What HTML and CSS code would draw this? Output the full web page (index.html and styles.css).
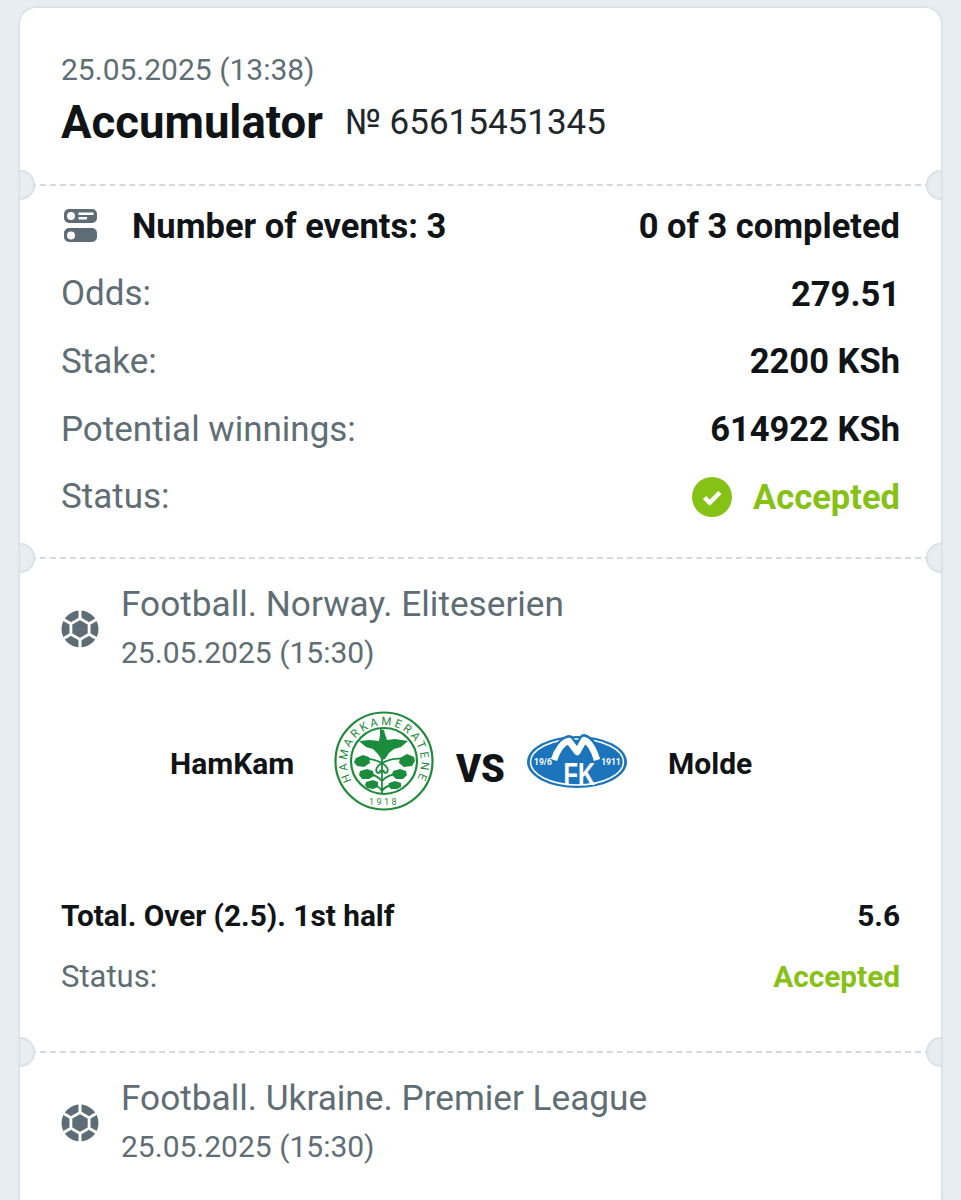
FILE: index.html
```html
<!DOCTYPE html>
<html lang="en">
<head>
<meta charset="utf-8">
<title>Accumulator</title>
<link rel="stylesheet" href="styles.css">
</head>
<body>
<main class="ticket">
  <header class="section head">
    <div class="date">25.05.2025 (13:38)</div>
    <div class="title-row">
      <h1 class="title">Accumulator</h1>
      <span class="number">№ 65615451345</span>
    </div>
  </header>

  <section class="section summary">
    <span class="notch left"></span><span class="notch right"></span>
    <div class="row">
      <div class="events">
        <svg class="list-icon" viewBox="0 0 33 33" aria-hidden="true">
          <path fill="#5d6c75" fill-rule="evenodd" d="M5 0h23a5 5 0 0 1 5 5v4a5 5 0 0 1-5 5H5a5 5 0 0 1-5-5V5a5 5 0 0 1 5-5Zm2 3a4 4 0 1 0 0 8 4 4 0 0 0 0-8Zm7.500.5V6h15V3.500Zm0 4.500v2.500h8.500V8Z"/>
          <path fill="#5d6c75" fill-rule="evenodd" d="M5 19h23a5 5 0 0 1 5 5v4a5 5 0 0 1-5 5H5a5 5 0 0 1-5-5v-4a5 5 0 0 1 5-5Zm2 3.500a4 4 0 1 0 0 8 4 4 0 0 0 0-8Z"/>
        </svg>
        <strong class="value">Number of events: 3</strong>
      </div>
      <strong class="value">0 of 3 completed</strong>
    </div>
    <div class="row"><span class="label">Odds:</span><strong class="value">279.51</strong></div>
    <div class="row"><span class="label">Stake:</span><strong class="value">2200 KSh</strong></div>
    <div class="row"><span class="label">Potential winnings:</span><strong class="value">614922 KSh</strong></div>
    <div class="row">
      <span class="label">Status:</span>
      <div class="status">
        <svg class="check" viewBox="0 0 40 40" aria-hidden="true">
          <circle cx="20" cy="20" r="20" fill="#86c216"/>
          <path d="M12.500 20.500l5.300 5.300 10-10.300" fill="none" stroke="#fff" stroke-width="4.500" stroke-linejoin="round"/>
        </svg>
        <strong class="value accepted">Accepted</strong>
      </div>
    </div>
  </section>

  <section class="section event">
    <span class="notch left"></span><span class="notch right"></span>
    <div class="league">
      <svg class="ball" viewBox="0 0 38 38" aria-hidden="true">
        <g id="ball">
          <circle cx="19" cy="19" r="18.500" fill="#5d6c75"/>
          <path d="M19 0v9M36.300 9 27.660 14M36.300 29 27.660 24M19 38v-9M1.700 29l8.640-5M1.700 9l8.640 5" stroke="#fff" stroke-width="3" fill="none"/>
          <path d="M19 8.500l9.100 5.250v10.500L19 29.500l-9.100-5.250v-10.500Z" fill="#5d6c75" stroke="#fff" stroke-width="2.800"/>
        </g>
      </svg>
      <div>
        <div class="league-name">Football. Norway. Eliteserien</div>
        <div class="league-date">25.05.2025 (15:30)</div>
      </div>
    </div>
    <div class="match">
      <span class="team home">HamKam</span>
      <svg class="crest-ham" viewBox="0 0 100 100" role="img" aria-label="HamKam crest">
        <circle cx="50" cy="50" r="48.500" fill="none" stroke="#1f8a3a" stroke-width="2.200"/>
        <circle cx="50" cy="50" r="33" fill="none" stroke="#1f8a3a" stroke-width="2.200"/>
        <defs>
          <path id="ringTop" d="M17 68A37 37 0 1 1 83 68"/>
        </defs>
        <text class="crest-ring"><textPath href="#ringTop" startOffset="50%" text-anchor="middle">HAMARKAMERATENE</textPath></text>
        <text class="crest-year" x="50" y="94" text-anchor="middle">1918</text>
        <path fill="#1a8c3c" d="M46 18l4 1 1 4 2 6 8-1 13 2-7 6-7 2-5 4-4 6-3 1-4-6-5-5-7-2-7-6 11-1 9 1 1-6Z"/>
        <path d="M48 44v38M48 52c-6-3-14-6-22-3M48 52c6-3 16-6 26-3M48 52c-5 3-7 7-5 9 2 2 4 0 3-2M48 52c5 3 7 7 5 9-2 2-4 0-3-2M48 70c-4-5-10-7-15-8M48 70c4-5 10-7 18-8M48 80c-3-5-6-6-10-7M48 80c3-5 8-6 13-6" fill="none" stroke="#1a8c3c" stroke-width="1.800"/>
        <g fill="#1a8c3c">
          <path d="M22 47l7-3 6 2 1 6-6 4-7-1-3-4Z"/>
          <path d="M66 47l7-4 7 3 1 4-3 5-8 1-5-4Z"/>
          <path d="M26 60l7-2 6 2 1 5-5 3-7 0-3-4Z"/>
          <path d="M59 60l7-2 6 2 1 4-4 4-7 0-4-4Z"/>
          <path d="M32 71l7-2 5 2 0 5-5 2-6-1-2-3Z"/>
          <path d="M55 72l6-2 6 2 0 4-4 2-6 0-3-3Z"/>
        </g>
      </svg>
      <span class="vs">VS</span>
      <svg class="crest-molde" viewBox="0 0 102 56" role="img" aria-label="Molde crest">
        <ellipse cx="51" cy="29" rx="50" ry="26" fill="#1c74bd"/>
        <ellipse cx="51" cy="29" rx="46.500" ry="23" fill="none" stroke="#fff" stroke-width="1.500"/>
        <path d="M27 29C30 18 36 9 43 7l8.300 12L58 6c6 2 11 11 14 23" fill="none" stroke="#1c74bd" stroke-width="10" stroke-linejoin="round"/>
        <path d="M28 27C31 17 37 9 43 8l8.300 11L58 7c6 2 10 10 13 20" fill="none" stroke="#fff" stroke-width="6.500" stroke-linejoin="round"/>
        <text class="molde-date" x="17" y="32" text-anchor="middle">19/6</text>
        <text class="molde-date" x="85" y="32" text-anchor="middle">1911</text>
        <text class="molde-fk" transform="translate(37.500 52) scale(.74 1)">FK</text>
      </svg>
      <span class="team away">Molde</span>
    </div>
    <div class="pick-row">
      <strong class="pick">Total. Over (2.5). 1st half</strong>
      <strong class="pick">5.6</strong>
    </div>
    <div class="pick-row status-row">
      <span class="small-label">Status:</span>
      <strong class="pick accepted">Accepted</strong>
    </div>
  </section>

  <section class="section event last">
    <span class="notch left"></span><span class="notch right"></span>
    <div class="league">
      <svg class="ball" viewBox="0 0 38 38" aria-hidden="true">
        <use href="#ball"/>
      </svg>
      <div>
        <div class="league-name">Football. Ukraine. Premier League</div>
        <div class="league-date">25.05.2025 (15:30)</div>
      </div>
    </div>
  </section>
</main>
</body>
</html>
```

FILE: styles.css
```css
* { box-sizing: border-box; }
html, body { margin: 0; height: 100%; }
body {
  background: #e8edf1;
  font-family: Roboto, "Liberation Sans", sans-serif;
  color: #111416;
  overflow: hidden;
  padding: 8px 20px 0;
}
.ticket {
  background: #fff;
  border-radius: 16px 16px 0 0;
  box-shadow: 0 0 3px rgba(120, 135, 150, .35);
  width: 921px;
  height: 1192px;
  overflow: hidden;
}
.section {
  position: relative;
  padding: 0 41px;
}
.section + .section { border-top: 2px dashed #d5d9dc; }
.notch {
  position: absolute;
  top: -16px;
  width: 30px;
  height: 30px;
  border-radius: 50%;
  background: #e8edf1;
  box-shadow: inset 0 0 3px rgba(120, 135, 150, .4);
}
.notch.left { left: -15px; }
.notch.right { right: -15px; }

.head { height: 176px; padding-top: 44px; }
.date { font-size: 30px; line-height: 35px; color: #5f6d75; }
.title-row { display: flex; align-items: center; gap: 22px; margin-top: 10px; }
.title { margin: 0; font-size: 45.500px; line-height: 52px; font-weight: 700; }
.number { font-size: 35px; line-height: 40px; color: #20262a; }

.summary { height: 373px; padding-top: 6px; }
.row { display: flex; justify-content: space-between; align-items: center; height: 68px; margin-top: -.25px; }
.events { display: flex; align-items: center; gap: 35px; padding-left: 3px; }
.list-icon { width: 33px; height: 33px; flex: none; }
.label { font-size: 35px; color: #5f6d75; }
.value { font-size: 34.500px; font-weight: 700; }
.status { display: flex; align-items: center; gap: 21px; }
.check { width: 40px; height: 40px; }
.accepted { color: #86c216; }

.event { height: 494px; }
.last { height: auto; }
.league { display: flex; align-items: center; gap: 22px; padding-top: 21px; }
.ball { width: 38px; height: 38px; flex: none; }
.league-name { font-size: 35.200px; line-height: 48px; color: #5f6d75; }
.league-date { font-size: 30px; line-height: 50px; color: #5f6d75; }

.match { display: flex; align-items: center; height: 108px; margin-top: 29px; }
.team { font-size: 30px; font-weight: 700; position: relative; top: 2px; }
.home { width: 273px; padding-left: 109px; }
.crest-ham { width: 100px; height: 100px; flex: none; }
.vs { font-size: 38px; font-weight: 900; margin-left: 22px; width: 70px; position: relative; top: 8px; }
.crest-molde { width: 102px; height: 56px; flex: none; margin-right: 40px; overflow: visible; }
.crest-ring { font-family: Roboto, sans-serif; font-size: 11.500px; letter-spacing: 2.700px; fill: #1f8a3a; }
.crest-year { font-family: Roboto, sans-serif; font-size: 9px; letter-spacing: 2.400px; fill: #1f8a3a; }
.molde-date { font-family: Roboto, sans-serif; font-size: 8.500px; font-weight: 700; fill: #fff; }
.molde-fk { font-family: "Liberation Sans", sans-serif; font-size: 32px; font-weight: 700; fill: #fff; }

.pick-row { display: flex; justify-content: space-between; align-items: center; margin-top: 82px; height: 36px; }
.status-row { margin-top: 25px; }
.pick { font-size: 29.800px; font-weight: 700; }
.small-label { font-size: 31px; color: #5f6d75; }
```
